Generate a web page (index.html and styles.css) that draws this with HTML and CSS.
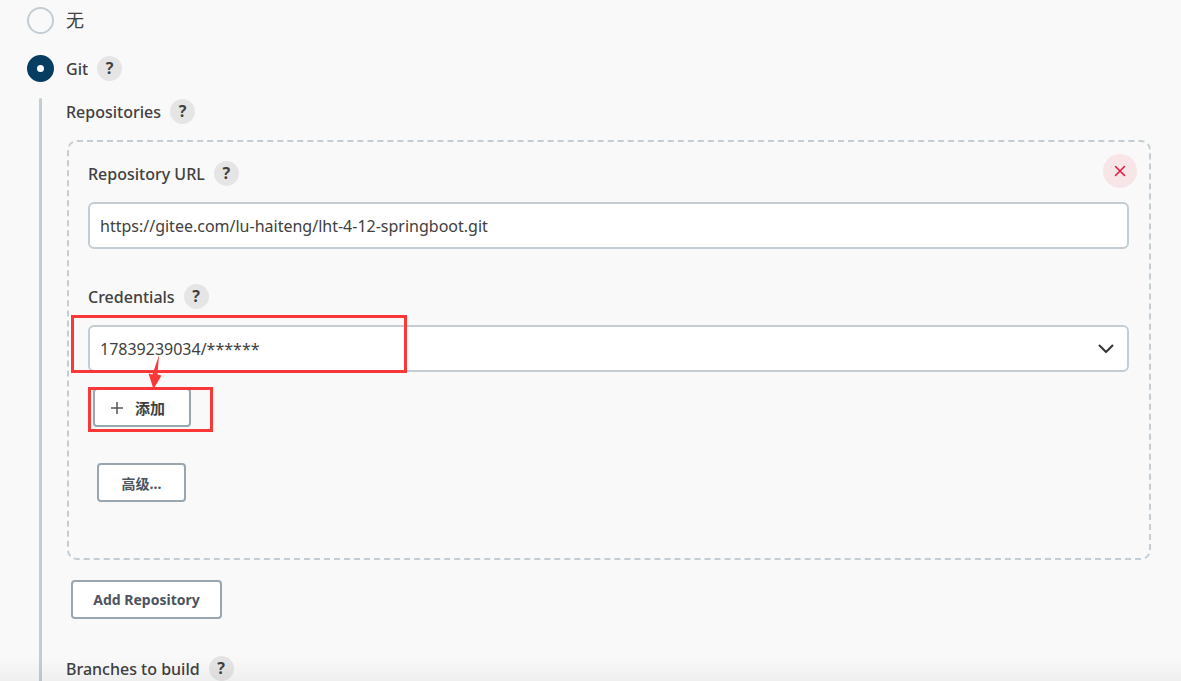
FILE: index.html
```html
<!DOCTYPE html>
<html lang="zh-CN">
<head>
<meta charset="utf-8">
<meta name="viewport" content="width=device-width, initial-scale=1">
<title>Git</title>
<link rel="stylesheet" href="styles.css">
</head>
<body>
<form class="scm">
  <div class="option">
    <input class="radio" type="radio" name="scm" id="scm-none">
    <label class="option-none" for="scm-none">无</label>
  </div>
  <div class="option">
    <input class="radio" type="radio" name="scm" id="scm-git" checked>
    <label class="label" for="scm-git">Git</label>
    <button class="help" type="button">?</button>
  </div>
  <div class="nested">
    <div class="heading">
      <span class="label">Repositories</span>
      <button class="help" type="button">?</button>
    </div>
    <section class="repository">
      <button class="remove" type="button" aria-label="Remove">
        <svg width="12" height="12" viewBox="0 0 12 12"><path d="M1.500 1.500l9 9M10.500 1.500l-9 9" fill="none" stroke="#e01638" stroke-width="1.500" stroke-linecap="round"/></svg>
      </button>
      <div class="heading">
        <label class="label" for="url">Repository URL</label>
        <button class="help" type="button">?</button>
      </div>
      <input class="field" id="url" type="text" value="https://gitee.com/lu-haiteng/lht-4-12-springboot.git">
      <div class="heading credentials-heading">
        <label class="label" for="credentials">Credentials</label>
        <button class="help" type="button">?</button>
      </div>
      <div class="select-wrap">
        <select class="field" id="credentials"><option>17839239034/******</option></select>
        <svg class="chevron" width="16" height="10" viewBox="0 0 16 10"><path d="M1.500 1.500L8 8l6.500-6.500" fill="none" stroke="#333" stroke-width="2" stroke-linecap="round" stroke-linejoin="round"/></svg>
        <div class="mark mark-credentials"></div>
        <svg class="arrow" width="14" height="34" viewBox="0 0 14 34"><path d="M11 0L9.500 19.500L13.500 20.500L5.500 34L.5 18.500L4.500 19.500Z" fill="#fb3838"/></svg>
      </div>
      <div class="add-row">
        <button class="button add" type="button">
          <svg width="12" height="12" viewBox="0 0 12 12"><path d="M6 0v12M0 6h12" fill="none" stroke="#555" stroke-width="1.500"/></svg>
          添加
        </button>
        <div class="mark mark-add"></div>
      </div>
      <button class="button advanced" type="button">高级...</button>
    </section>
    <button class="button add-repository" type="button">Add Repository</button>
    <div class="heading branches">
      <span class="label">Branches to build</span>
      <button class="help" type="button">?</button>
    </div>
  </div>
</form>
<div class="bottom-shade"></div>
</body>
</html>
```
FILE: styles.css
```css
* {
  box-sizing: border-box;
}

body {
  margin: 0;
  min-height: 100vh;
  overflow: hidden;
  background: #f9f9f9;
  color: #404040;
  font-family: "Noto Sans", "Noto Sans CJK SC", sans-serif;
  font-size: 16px;
}

button,
input,
select {
  margin: 0;
  font: inherit;
  color: inherit;
}

.scm {
  padding: 7px 30px 0 27px;
}

.option {
  display: flex;
  align-items: center;
  height: 27px;
  margin-bottom: 21px;
}

.option + .option {
  margin-bottom: 17px;
}

.option-none {
  font-size: 18px;
  line-height: 27px;
}

.radio {
  appearance: none;
  width: 27px;
  height: 27px;
  margin-right: 12px;
  border: 2px solid #c3cdd3;
  border-radius: 50%;
}

.radio:checked {
  border: 10px solid #063d61;
  background: #fff;
}

.label {
  font-size: 16px;
  font-weight: 500;
  line-height: 24px;
}

.help {
  width: 25px;
  height: 25px;
  margin-left: 9px;
  padding: 0;
  border: 0;
  border-radius: 50%;
  background: #e5e5e5;
  font-size: 16px;
  font-weight: 700;
  line-height: 25px;
}

.nested {
  position: relative;
  margin-left: 12px;
  padding-left: 27px;
}

.nested::before {
  content: "";
  position: absolute;
  top: -1px;
  bottom: -20px;
  left: 0;
  width: 3px;
  border-radius: 2px;
  background: #c3cdd3;
}

.heading {
  display: flex;
  align-items: center;
  height: 25px;
}

.repository {
  position: relative;
  margin: 16px 0 20px 1px;
  padding: 19px 20px 56px 19px;
  border: 2px dashed #c3cdd3;
  border-radius: 10px;
}

.remove {
  position: absolute;
  top: 12px;
  right: 12px;
  display: grid;
  place-items: center;
  width: 34px;
  height: 34px;
  padding: 0;
  border: 0;
  border-radius: 50%;
  background: #f7e5e7;
}

.field {
  appearance: none;
  display: block;
  width: 100%;
  height: 47px;
  padding: 0 10px;
  border: 2px solid #c3cdd3;
  border-radius: 6px;
  background: #fff;
}

.repository .heading {
  margin-bottom: 16px;
}

.repository .credentials-heading {
  margin-top: 35px;
}

.select-wrap {
  position: relative;
}

.chevron {
  position: absolute;
  top: 19px;
  right: 15px;
}

.mark {
  position: absolute;
  border: 3px solid #fb3838;
  pointer-events: none;
}

.mark-credentials {
  top: -10px;
  left: -17px;
  width: 336px;
  height: 58px;
}

.arrow {
  position: absolute;
  top: 30px;
  left: 60px;
}

.add-row {
  position: relative;
  margin-top: 16px;
  padding-left: 5px;
}

.mark-add {
  top: -1px;
  left: 0;
  width: 125px;
  height: 45px;
}

.button {
  display: flex;
  align-items: center;
  justify-content: center;
  height: 39px;
  padding: 0 20px;
  border: 2px solid #98a6b0;
  border-radius: 4px;
  background: #fff;
  color: #4d545e;
  font-size: 14px;
  font-weight: 700;
}

.add {
  justify-content: flex-start;
  gap: 12px;
  width: 98px;
  padding-left: 16px;
  color: #404040;
  font-size: 15px;
}

.advanced {
  width: 89px;
  margin: 36px 0 0 9px;
}

.add-repository {
  width: 151px;
  margin-left: 5px;
}

.branches {
  margin-top: 37px;
}

.bottom-shade {
  position: fixed;
  right: 0;
  bottom: 0;
  left: 0;
  height: 24px;
  background: linear-gradient(transparent, rgba(0, 0, 0, 0.04));
  pointer-events: none;
}
```
